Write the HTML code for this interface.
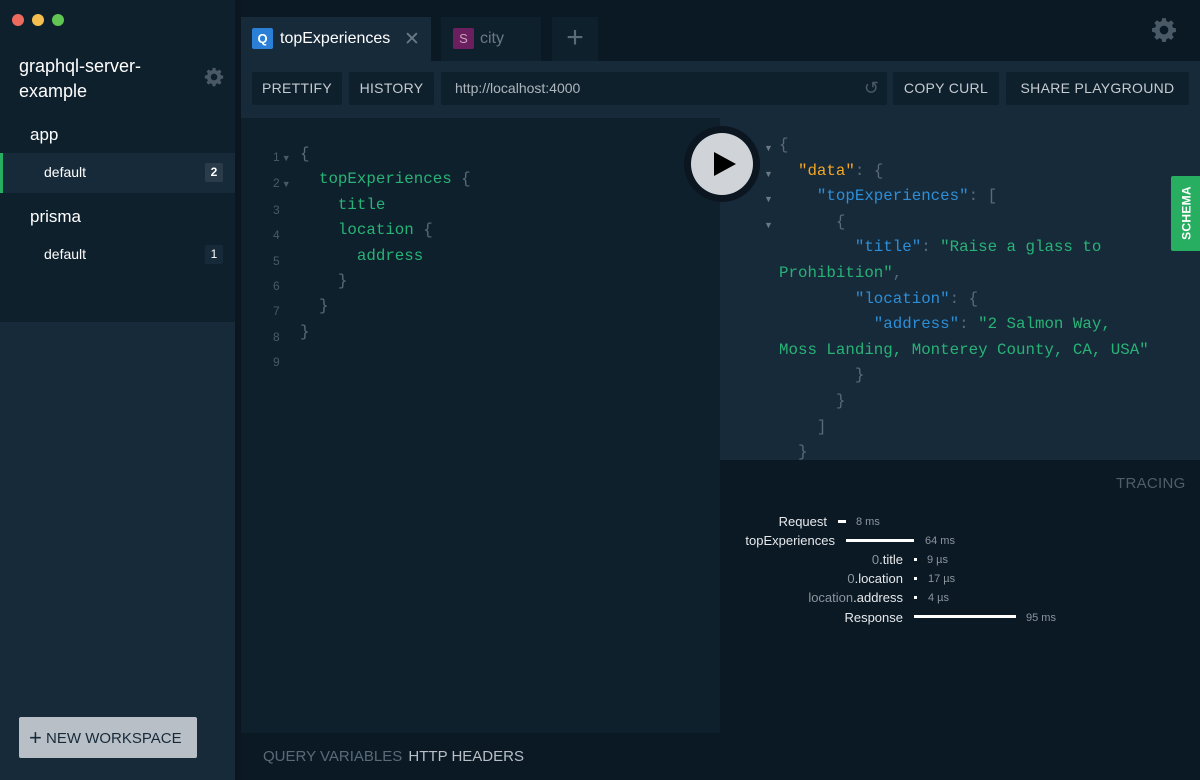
<!DOCTYPE html>
<html><head><meta charset="utf-8"><style>
*{margin:0;padding:0;box-sizing:border-box}
body{width:1200px;height:780px;overflow:hidden;background:#0b1924;font-family:"Liberation Sans",sans-serif;position:relative}
.a{position:absolute}
.mono{font-family:"Liberation Mono",monospace;font-size:15.8px;white-space:pre}
.g{color:#28b376}.b{color:#2e8ed6}.o{color:#f5a623}.p{color:#5a6a78}
.btn{position:absolute;top:72px;height:33px;background:#0f202d;border-radius:2px;color:#c5cbd1;font-size:14px;letter-spacing:.3px;line-height:33px;text-align:center}
.ln{color:#4a5966;font-size:12px;font-family:"Liberation Sans",sans-serif}
.tr{color:#e6e9ec;font-size:13px;text-align:right;width:190px}
.ms{color:#8b959e;font-size:11px}
.bar{height:3px;background:#fff}
</style></head><body>
<svg width="0" height="0" style="position:absolute"><defs><g id="gear"><path d="M10.3 1h3.4l.5 2.8 2 .9 2.4-1.6 2.4 2.4-1.6 2.4.9 2 2.7.5v3.4l-2.7.5-.9 2 1.6 2.4-2.4 2.4-2.4-1.6-2 .9-.5 2.7h-3.4l-.5-2.7-2-.9-2.4 1.6-2.4-2.4 1.6-2.4-.9-2L1 13.7v-3.4l2.8-.5.9-2-1.6-2.4 2.4-2.4 2.4 1.6 2-.9zM12 8a4 4 0 100 8 4 4 0 100-8z" fill-rule="evenodd"/></g></defs></svg>
<!-- sidebar -->
<div class="a" style="left:0;top:0;width:235px;height:322px;background:#0f202d"></div>
<div class="a" style="left:0;top:322px;width:235px;height:458px;background:#172a3a"></div>
<div class="a" style="left:235px;top:0;width:6px;height:780px;background:#0b1620"></div>
<div class="a" style="left:12px;top:14px;width:12px;height:12px;border-radius:50%;background:#ed6a5e"></div>
<div class="a" style="left:32px;top:14px;width:12px;height:12px;border-radius:50%;background:#f5bf4f"></div>
<div class="a" style="left:52px;top:14px;width:12px;height:12px;border-radius:50%;background:#61c554"></div>
<div class="a" style="left:19px;top:54px;color:#fff;font-size:18px;line-height:25px">graphql-server-<br>example</div>
<svg class="a" style="left:204px;top:67px" width="20" height="20" viewBox="0 0 24 24" fill="#4a5966"><use href="#gear"/></svg>
<div class="a" style="left:30px;top:125px;color:#fff;font-size:17px">app</div>
<div class="a" style="left:0;top:153px;width:235px;height:40px;background:#172a3a;border-left:3px solid #27ae60"></div>
<div class="a" style="left:44px;top:164px;color:#fff;font-size:14px">default</div>
<div class="a" style="left:205px;top:163px;width:18px;height:19px;background:#2a3b4a;border-radius:2px;color:#fff;font-size:12px;font-weight:bold;text-align:center;line-height:19px">2</div>
<div class="a" style="left:30px;top:207px;color:#fff;font-size:17px">prisma</div>
<div class="a" style="left:44px;top:246px;color:#fff;font-size:14px">default</div>
<div class="a" style="left:205px;top:245px;width:18px;height:19px;background:#172a3a;border-radius:2px;color:#fff;font-size:12px;text-align:center;line-height:19px">1</div>
<div class="a" style="left:19px;top:717px;width:178px;height:41px;background:#b9bfc6;border-radius:2px;color:#172a3a;font-size:15px;line-height:41px;padding-left:10px;white-space:nowrap"><span style="font-size:22px;vertical-align:-2px">+</span> NEW WORKSPACE</div>
<!-- tabs -->
<div class="a" style="left:241px;top:17px;width:190px;height:44px;background:#172a3a"></div>
<div class="a" style="left:252px;top:28px;width:21px;height:21px;background:#2b7fd6;border-radius:2px;color:#fff;font-weight:bold;font-size:13px;text-align:center;line-height:21px">Q</div>
<div class="a" style="left:280px;top:30px;color:#fff;font-size:16px">topExperiences</div>
<div class="a" style="left:404px;top:28px;color:#6b7985;font-size:19px">✕</div>
<div class="a" style="left:441px;top:17px;width:100px;height:44px;background:#0f202d"></div>
<div class="a" style="left:453px;top:28px;width:21px;height:21px;background:#6b1f5f;border-radius:2px;color:#c9a2c0;font-size:13px;text-align:center;line-height:21px">S</div>
<div class="a" style="left:480px;top:30px;color:#6b7985;font-size:16px">city</div>
<div class="a" style="left:552px;top:17px;width:46px;height:44px;background:#0f202d;color:#5a6a78;font-size:30px;text-align:center;line-height:42px">+</div>
<svg class="a" style="left:1151px;top:17px" width="26" height="26" viewBox="0 0 24 24" fill="#4a5966"><use href="#gear"/></svg>
<!-- toolbar -->
<div class="a" style="left:241px;top:61px;width:959px;height:57px;background:#172a3a"></div>
<div class="btn" style="left:252px;width:90px">PRETTIFY</div>
<div class="btn" style="left:349px;width:85px">HISTORY</div>
<div class="btn" style="left:441px;width:446px;text-align:left;padding-left:14px;background:#0f202d;font-size:14px;letter-spacing:0;color:#aeb6bd">http://localhost:4000<span style="position:absolute;right:8px;color:#4a5966;font-size:18px">↺</span></div>
<div class="btn" style="left:893px;width:106px">COPY CURL</div>
<div class="btn" style="left:1006px;width:183px">SHARE PLAYGROUND</div>
<!-- editor -->
<div class="a" style="left:241px;top:118px;width:479px;height:615px;background:#0f202d"></div>
<div class="a" style="left:241px;top:733px;width:479px;height:47px;background:#0b1924"></div>
<div class="a" style="left:263px;top:748px;font-size:15px;color:#5a6a78">QUERY VARIABLES <span style="color:#b9bfc6;margin-left:2px">HTTP HEADERS</span></div>
<div class="a" style="left:273px;top:145px;line-height:25.4px">
<div class="ln">1<span style="font-size:9px;margin-left:2px">▼</span></div><div class="ln">2<span style="font-size:9px;margin-left:2px">▼</span></div><div class="ln">3</div><div class="ln">4</div><div class="ln">5</div><div class="ln">6</div><div class="ln">7</div><div class="ln">8</div><div class="ln">9</div></div>
<div class="a mono" style="left:300px;top:142px;line-height:25.4px"><span class="p">{</span>
  <span class="g">topExperiences</span> <span class="p">{</span>
    <span class="g">title</span>
    <span class="g">location</span> <span class="p">{</span>
      <span class="g">address</span>
    <span class="p">}</span>
  <span class="p">}</span>
<span class="p">}</span></div>
<!-- result -->
<div class="a" style="left:720px;top:118px;width:480px;height:342px;background:#172a3a"></div>
<div class="a" style="left:684px;top:126px;width:76px;height:76px;border-radius:50%;background:#0b1620"></div>
<div class="a" style="left:691px;top:133px;width:62px;height:62px;border-radius:50%;background:#d0d4d8"></div>
<div class="a" style="left:714px;top:152px;width:0;height:0;border-left:22px solid #000;border-top:12px solid transparent;border-bottom:12px solid transparent"></div>
<div class="a" style="left:764px;top:136px;line-height:25.6px;color:#6b7985;font-size:9px"><div>▼</div><div>▼</div><div>▼</div><div>▼</div></div>
<div class="a mono" style="left:779px;top:133px;line-height:25.6px"><span class="p">{</span>
  <span class="o">"data"</span><span class="p">: {</span>
    <span class="b">"topExperiences"</span><span class="p">: [</span>
      <span class="p">{</span>
        <span class="b">"title"</span><span class="p">:</span> <span class="g">"Raise a glass to</span>
<span class="g">Prohibition"</span><span class="p">,</span>
        <span class="b">"location"</span><span class="p">: {</span>
          <span class="b">"address"</span><span class="p">:</span> <span class="g">"2 Salmon Way,</span>
<span class="g">Moss Landing, Monterey County, CA, USA"</span>
        <span class="p">}</span>
      <span class="p">}</span>
    <span class="p">]</span>
  <span class="p">}</span></div>
<div class="a" style="left:1171px;top:176px;width:29px;height:75px;background:#27ae60;border-radius:2px 0 0 2px"></div>
<div class="a" style="left:1149px;top:206px;width:75px;transform:rotate(-90deg);color:#fff;font-size:12px;font-weight:bold;letter-spacing:.3px;text-align:center">SCHEMA</div>
<!-- tracing -->
<div class="a" style="left:720px;top:460px;width:480px;height:320px;background:#0b1924"></div>
<div class="a" style="left:1116px;top:475px;color:#4f5d69;font-size:15px;letter-spacing:.3px">TRACING</div>
<div class="a tr" style="left:637px;top:514px">Request</div>
<div class="a bar" style="left:838px;top:520px;width:8px"></div><div class="a ms" style="left:856px;top:516px">8 ms</div>
<div class="a tr" style="left:645px;top:533px">topExperiences</div>
<div class="a bar" style="left:846px;top:539px;width:68px"></div><div class="a ms" style="left:925px;top:535px">64 ms</div>
<div class="a tr" style="left:713px;top:552px"><span style="color:#8b959e">0</span>.title</div>
<div class="a bar" style="left:914px;top:558px;width:3px"></div><div class="a ms" style="left:927px;top:554px">9 µs</div>
<div class="a tr" style="left:713px;top:571px"><span style="color:#8b959e">0</span>.location</div>
<div class="a bar" style="left:914px;top:577px;width:3px"></div><div class="a ms" style="left:928px;top:573px">17 µs</div>
<div class="a tr" style="left:713px;top:590px"><span style="color:#8b959e">location</span>.address</div>
<div class="a bar" style="left:914px;top:596px;width:3px"></div><div class="a ms" style="left:928px;top:592px">4 µs</div>
<div class="a tr" style="left:713px;top:610px">Response</div>
<div class="a bar" style="left:914px;top:615px;width:102px"></div><div class="a ms" style="left:1026px;top:612px">95 ms</div>
</body></html>
